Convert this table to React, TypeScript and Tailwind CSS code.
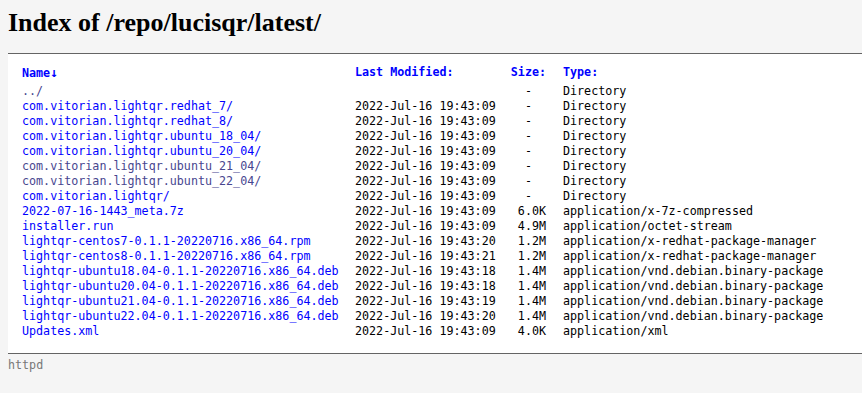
import React from "react";

type Row = { name: string; date: string; size: string; type: string; visited?: boolean };

const D = "2022-Jul-16 19:43:";
const rows: Row[] = [
  { name: "../", date: "", size: "-\u00a0\u00a0", type: "Directory", visited: true },
  { name: "com.vitorian.lightqr.redhat_7/", date: D + "09", size: "-\u00a0\u00a0", type: "Directory" },
  { name: "com.vitorian.lightqr.redhat_8/", date: D + "09", size: "-\u00a0\u00a0", type: "Directory" },
  { name: "com.vitorian.lightqr.ubuntu_18_04/", date: D + "09", size: "-\u00a0\u00a0", type: "Directory" },
  { name: "com.vitorian.lightqr.ubuntu_20_04/", date: D + "09", size: "-\u00a0\u00a0", type: "Directory" },
  { name: "com.vitorian.lightqr.ubuntu_21_04/", date: D + "09", size: "-\u00a0\u00a0", type: "Directory", visited: true },
  { name: "com.vitorian.lightqr.ubuntu_22_04/", date: D + "09", size: "-\u00a0\u00a0", type: "Directory", visited: true },
  { name: "com.vitorian.lightqr/", date: D + "09", size: "-\u00a0\u00a0", type: "Directory" },
  { name: "2022-07-16-1443_meta.7z", date: D + "09", size: "6.0K", type: "application/x-7z-compressed" },
  { name: "installer.run", date: D + "09", size: "4.9M", type: "application/octet-stream" },
  { name: "lightqr-centos7-0.1.1-20220716.x86_64.rpm", date: D + "20", size: "1.2M", type: "application/x-redhat-package-manager" },
  { name: "lightqr-centos8-0.1.1-20220716.x86_64.rpm", date: D + "21", size: "1.2M", type: "application/x-redhat-package-manager" },
  { name: "lightqr-ubuntu18.04-0.1.1-20220716.x86_64.deb", date: D + "18", size: "1.4M", type: "application/vnd.debian.binary-package" },
  { name: "lightqr-ubuntu20.04-0.1.1-20220716.x86_64.deb", date: D + "18", size: "1.4M", type: "application/vnd.debian.binary-package" },
  { name: "lightqr-ubuntu21.04-0.1.1-20220716.x86_64.deb", date: D + "19", size: "1.4M", type: "application/vnd.debian.binary-package" },
  { name: "lightqr-ubuntu22.04-0.1.1-20220716.x86_64.deb", date: D + "20", size: "1.4M", type: "application/vnd.debian.binary-package" },
  { name: "Updates.xml", date: D + "09", size: "4.0K", type: "application/xml" },
];

const mono = "font-['DejaVu_Sans_Mono','Liberation_Mono',monospace] text-[11.7px] leading-[15px]";

export default function App() {
  return (
    <div className="min-h-[393px] w-full bg-[#f5f5f5] overflow-hidden">
      <h2 className="pl-[8px] pt-[8px] leading-[30px] text-[26px] font-bold text-black font-['Liberation_Serif','Times_New_Roman',serif] mb-[15px] whitespace-nowrap">
        Index of /repo/lucisqr/latest/
      </h2>
      <div className="ml-[8px] bg-white border-t border-b border-[#646464] pt-[11px] pb-[14px]">
        <div className={`grid grid-cols-[333px_145px_46px_1fr] pl-[14px] ${mono} whitespace-nowrap`}>
          <div className="font-bold text-[#0000ff] pb-[3px]">
            Name<span className="text-[13px]">↓</span>
          </div>
          <div className="font-bold text-[#0000ff] pb-[3px]">Last Modified:</div>
          <div className="font-bold text-[#0000ff] pb-[3px] text-right">Size:</div>
          <div className="font-bold text-[#0000ff] pb-[3px] pl-[17px]">Type:</div>
          {rows.map((r) => (
            <React.Fragment key={r.name}>
              <div className={r.visited ? "text-[#48468f]" : "text-[#0000ff]"}>{r.name}</div>
              <div className="text-black">{r.date}</div>
              <div className="text-black text-right">{r.size}</div>
              <div className="text-black pl-[17px]">{r.type}</div>
            </React.Fragment>
          ))}
        </div>
      </div>
      <div className={`pl-[8px] pt-[4px] text-[#787878] ${mono}`}>httpd</div>
    </div>
  );
}
